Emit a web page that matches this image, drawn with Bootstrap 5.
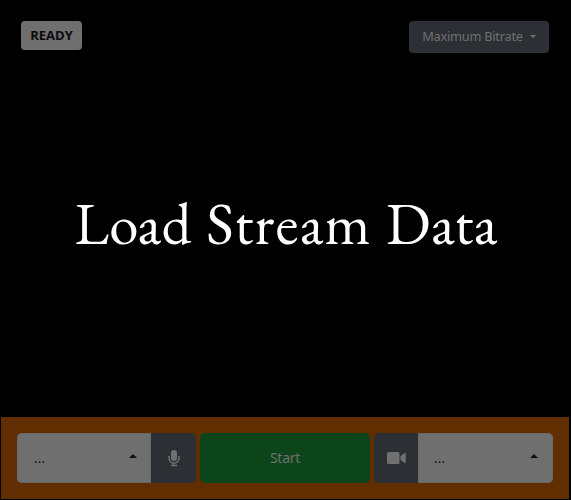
<!DOCTYPE html>
<html lang="en">
<head>
<meta charset="utf-8">
<meta name="viewport" content="width=device-width, initial-scale=1">
<title>Stream</title>
<link href="https://cdn.jsdelivr.net/npm/bootstrap@5.3.0/dist/css/bootstrap.min.css" rel="stylesheet">
<style>
body{background:#000;font-family:"Open Sans","Noto Sans",sans-serif;height:500px;overflow:hidden}
.stage{height:500px;padding:0 2px 1px 1px}
.topbar{padding:21px 20px 0 20px}
.status{width:61px;height:29px;background:#6f6f6f;color:#0b0c0d;font-size:13px;font-weight:700;border-radius:4px}
.bitrate,.bitrate:hover{width:140px;height:32px;padding:0;background:#2c2f34;color:#707070;border:0;font-family:"Noto Sans",sans-serif;font-size:12.8px;letter-spacing:-.25px;border-radius:4px}
.bitrate::after{margin-left:7px;vertical-align:3px}
.headline{font-family:"EB Garamond","Liberation Serif",serif;font-size:59px;line-height:1;color:#fff;white-space:nowrap;margin:0 0 24px 2px;letter-spacing:.35px;word-spacing:2.4px}
.headline .wide{letter-spacing:1.2px}
.controls{height:82px;background:#612e02;padding:16px;gap:4px}
.controls .btn{height:50px;font-size:14px;border:0;border-radius:0}
.picker,.picker:hover{background:#6f6f6f!important;color:#111;box-shadow:inset 0 0 0 1px #66686a;padding:0 14px 0 17px}
.picker span{margin-top:-2px}
.picker.round-r{padding:0 15px 0 16px}
.picker::after{position:relative;top:-2px}
.toggle,.toggle:hover{background:#2c2f34!important;color:#707070!important;padding:0}
.start,.start:hover{width:170px;background:#0c4519!important;color:#707070!important;padding:0 0 2px;font-family:"Noto Sans",sans-serif;letter-spacing:-.25px}
.controls .round-l{border-radius:5px 0 0 5px}
.controls .round-r{border-radius:0 5px 5px 0}
.controls .start{border-radius:5px}
.w-left{width:134px}.w-right{width:135px}.w-mic{width:45px}.w-cam{width:44px}
</style>
</head>
<body>
<main class="stage d-flex flex-column">
  <header class="topbar d-flex justify-content-between align-items-start">
    <span class="status d-flex align-items-center justify-content-center">READY</span>
    <button class="btn bitrate dropdown-toggle" type="button">Maximum Bitrate</button>
  </header>
  <div class="flex-grow-1 d-flex align-items-center justify-content-center">
    <h1 class="headline fw-normal">Load <span class="wide">Stream</span> Data</h1>
  </div>
  <footer class="controls d-flex">
    <div class="d-flex dropup">
      <button class="btn picker round-l w-left dropdown-toggle d-flex justify-content-between align-items-center" type="button"><span>...</span></button>
      <button class="btn toggle round-r w-mic d-flex align-items-center justify-content-center" type="button" aria-label="Microphone">
        <svg width="12" height="17" viewBox="0 0 12 17" fill="none" stroke="currentColor"><rect x="3" y="0" width="6" height="11" rx="3" fill="currentColor" stroke="none"/><path d="M1 6v2.200a5 5 0 0 0 10 0V6M6 13.200V16M3 15.500h6" stroke-width="1.500"/></svg>
      </button>
    </div>
    <button class="btn start" type="button">Start</button>
    <div class="d-flex dropup">
      <button class="btn toggle round-l w-cam d-flex align-items-center justify-content-center" type="button" aria-label="Camera">
        <svg width="19" height="12" viewBox="0 0 19 12" fill="currentColor"><rect width="12.500" height="12" rx="1.500"/><path d="M13.500 4.200 17.300 1.200Q18.700.4 18.700 1.800V10.200Q18.700 11.600 17.300 10.800L13.500 7.800Z"/></svg>
      </button>
      <button class="btn picker round-r w-right dropdown-toggle d-flex justify-content-between align-items-center" type="button"><span>...</span></button>
    </div>
  </footer>
</main>
<script src="https://cdn.jsdelivr.net/npm/bootstrap@5.3.0/dist/js/bootstrap.bundle.min.js"></script>
</body>
</html>
